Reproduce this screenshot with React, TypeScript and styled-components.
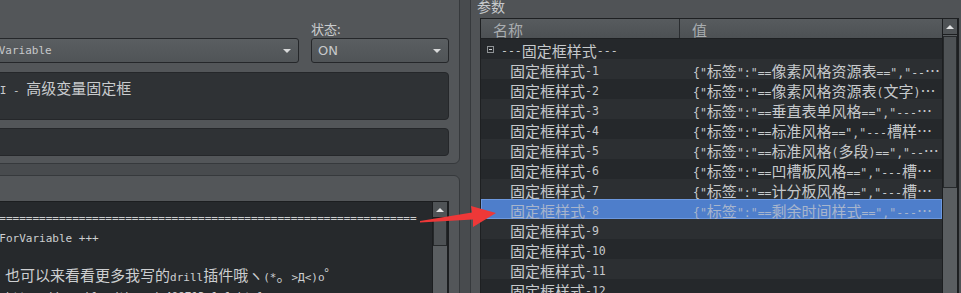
import React from 'react';
import styled, { createGlobalStyle } from 'styled-components';

const GlobalStyle = createGlobalStyle`
	html,
	body {
		margin: 0;
		padding: 0;
		background: #484b4e;
	}
	body {
		font-family: "Noto Sans CJK SC", "DejaVu Sans", sans-serif;
	}
`;

const Window = styled.div`
	position: relative;
	display: flex;
	width: 961px;
	height: 293px;
	overflow: hidden;
	background: #484b4e;
	color: #c8cacc;
	font-family: "Noto Sans CJK SC", "DejaVu Sans", sans-serif;
`;

/* ---------- left side: plugin form ---------- */

const LeftPane = styled.div`
	flex: none;
	width: 460px;
	overflow: hidden;
`;
const LeftContent = styled.div`
	display: flex;
	flex-direction: column;
	width: 570px;
	margin-left: -110px;
`;
const GroupBox = styled.section<{ $top: number; $pad: string }>`
	flex: none;
	box-sizing: border-box;
	margin-top: ${(p) => p.$top}px;
	padding: ${(p) => p.$pad};
	border: 1px solid #36393c;
	border-radius: 6px;
	background: #535659;
`;
const FieldGrid = styled.div`
	display: grid;
	grid-template-columns: 1fr 138px;
	grid-template-rows: 18px 25px;
	column-gap: 12px;
`;
const FieldLabel = styled.div`
	grid-column: 2;
	font-size: 13px;
	line-height: 18px;
	color: #c9cbcd;
`;
const Combo = styled.div<{ $col: number }>`
	grid-column: ${(p) => p.$col};
	grid-row: 2;
	box-sizing: border-box;
	display: flex;
	align-items: center;
	height: 25px;
	padding: 0 6px;
	border: 1px solid #25272a;
	border-radius: 3px;
	background: linear-gradient(#5a5e61, #505457);
	white-space: pre;
	overflow: hidden;
`;
const ComboText = styled.span<{ $mono?: boolean }>`
	flex: 1;
	font-family: ${(p) => (p.$mono ? '"DejaVu Sans Mono", monospace' : '"DejaVu Sans", sans-serif')};
	font-size: ${(p) => (p.$mono ? 11 : 13)}px;
	color: #c6c8ca;
`;
const ComboArrow = styled.span`
	width: 0;
	height: 0;
	margin-right: 1px;
	border-left: 4px solid transparent;
	border-right: 4px solid transparent;
	border-top: 4px solid #d8d9da;
`;
const TextBox = styled.div<{ $h: number; $gap: number }>`
	box-sizing: border-box;
	height: ${(p) => p.$h}px;
	margin-top: ${(p) => p.$gap}px;
	padding: 5px 7px;
	border: 1px solid #25272a;
	border-radius: 4px;
	background: #2f3235;
	font-size: 15px;
	line-height: 20px;
	white-space: pre;
	overflow: hidden;
	color: #c9cbcd;
`;
const Editor = styled.div`
	display: flex;
	height: 130px;
	border: 1px solid #1c1e20;
	background: #26292c;
`;
const EditorText = styled.div`
	flex: 1;
	min-width: 0;
	padding-top: 4px;
	font-size: 15px;
	white-space: pre;
	overflow: hidden;
	color: #cdcfd1;
`;
const EditorLine = styled.div`
	height: 19.5px;
	line-height: 19.5px;
`;
const ScrollBar = styled.div<{ $thumbTop: number; $thumbH: number }>`
	display: flex;
	flex-direction: column;
	flex: none;
	width: 14px;
	border-left: 1px solid #1c1e20;
	border-right: 1px solid #1c1e20;
	background: #5a5e61;
	&::after {
		content: '';
		box-sizing: border-box;
		height: ${(p) => p.$thumbH}px;
		margin-top: ${(p) => p.$thumbTop}px;
		border: 1px solid #26292b;
		background: #4e5255;
	}
`;
const ScrollUp = styled.div`
	display: flex;
	align-items: center;
	justify-content: center;
	height: 15px;
	border-bottom: 1px solid #1c1e20;
	background: #4f5356;
	&::before {
		content: '';
		border-left: 4px solid transparent;
		border-right: 4px solid transparent;
		border-bottom: 4px solid #e2e3e4;
	}
`;

/* ---------- right side: parameter table ---------- */

const Splitter = styled.div`
	flex: none;
	width: 10px;
`;
const RightPane = styled.div`
	flex: 1;
	display: flex;
	flex-direction: column;
	padding-left: 6px;
	border-left: 1px solid #36393c;
	background: #505356;
`;
const PaneTitle = styled.div`
	flex: none;
	margin-top: -3px;
	height: 21px;
	font-size: 14px;
	line-height: 18px;
	color: #c6c9cc;
`;
const Table = styled.div`
	flex: none;
	display: flex;
	width: 479px;
	height: 290px;
	margin-left: 3px;
	box-sizing: border-box;
	border: 1px solid #1e2022;
	background: #26292c;
`;
const TableMain = styled.div`
	flex: 1;
	min-width: 0;
	display: flex;
	flex-direction: column;
`;
const HeaderRow = styled.div`
	flex: none;
	display: grid;
	grid-template-columns: 199px 1fr;
	height: 19px;
	border-bottom: 1px solid #1e2022;
	background: linear-gradient(#575b5e, #4d5154);
`;
const HeaderCell = styled.div<{ $sep?: boolean }>`
	box-sizing: border-box;
	padding: 1px 0 0 12px;
	border-right: ${(p) => (p.$sep ? '1px solid #2a2d30' : 'none')};
	font-size: 15px;
	line-height: 19px;
	overflow: hidden;
	color: #a9adb0;
`;
const Row = styled.div<{ $alt: boolean; $selected: boolean }>`
	flex: none;
	box-sizing: border-box;
	display: grid;
	grid-template-columns: 200px 1fr;
	height: 20px;
	padding-top: 2px;
	font-size: 15px;
	line-height: 20px;
	white-space: pre;
	background: ${(p) => (p.$selected ? '#4e7ecb' : p.$alt ? '#2c2f32' : '#25282b')};
	box-shadow: ${(p) => (p.$selected ? 'inset 0 0 0 1px #6c98df' : 'none')};
	color: ${(p) => (p.$selected ? '#a7b5cd' : '#c6c9cc')};
`;
const NameCell = styled.div<{ $indent: number }>`
	display: flex;
	align-items: flex-start;
	height: 20px;
	padding-left: ${(p) => p.$indent}px;
	overflow: hidden;
`;
const ValueCell = styled.div`
	height: 20px;
	padding-left: 12px;
	overflow: hidden;
	text-overflow: ellipsis;
`;
const Collapse = styled.span`
	position: relative;
	flex: none;
	box-sizing: border-box;
	width: 7px;
	height: 7px;
	margin: 5px 7px 0 0;
	border: 1px solid #8e9295;
	&::after {
		content: '';
		position: absolute;
		left: 1px;
		right: 1px;
		top: 2px;
		height: 1px;
		background: #d0d2d4;
	}
`;
const Latin = styled.span<{ $size: number }>`
	font-family: "DejaVu Sans Mono", monospace;
	font-size: ${(p) => p.$size}px;
`;

const Pointer = styled.svg`
	position: absolute;
	left: 418px;
	top: 202px;
	pointer-events: none;
`;

const LATIN_RUN = /([\u0000-\u024f\u0400-\u04ff]+)/;

const Mixed: React.FC<{ text: string; size?: number }> = ({ text, size = 11 }) => (
	<>
		{text
			.split(LATIN_RUN)
			.filter(Boolean)
			.map((part, i) =>
				LATIN_RUN.test(part) ? (
					<Latin key={i} $size={size}>
						{part}
					</Latin>
				) : (
					<span key={i}>{part}</span>
				),
			)}
	</>
);

const editorLines = [
	'='.repeat(78),
	'+++ Drill_GaugeForVariable +++',
	'',
	'如果你有兴趣，也可以来看看更多我写的drill插件哦ヽ(*。>Д<)o゜',
	'                https://rpg.blue/thread-409713-1-1.html',
];

const tail = ',"---槽样式---":"","资源-背景":"Gauge_Bg","资源-槽":"Gauge_Fill"}';
const values = [
	'{"标签":"==像素风格资源表=="' + tail,
	'{"标签":"==像素风格资源表(文字)=="' + tail,
	'{"标签":"==垂直表单风格=="' + tail,
	'{"标签":"==标准风格=="' + tail,
	'{"标签":"==标准风格(多段)=="' + tail,
	'{"标签":"==凹槽板风格=="' + tail,
	'{"标签":"==计分板风格=="' + tail,
	'{"标签":"==剩余时间样式=="' + tail,
	'',
	'',
	'',
	'',
];

const App: React.FC = () => {
	return (
		<>
			<GlobalStyle />
			<Window>
				<LeftPane>
					<LeftContent>
						<GroupBox $top={-10} $pad="29px 10px 7px 8px">
							<FieldGrid>
								<FieldLabel>状态:</FieldLabel>
								<Combo $col={1}>
									<ComboText $mono>Drill_GaugeForVariable</ComboText>
									<ComboArrow />
								</Combo>
								<Combo $col={2}>
									<ComboText>ON</ComboText>
									<ComboArrow />
								</Combo>
							</FieldGrid>
							<TextBox $h={48} $gap={9}>
								<Mixed text="[v1.7]       UI - 高级变量固定框" />
							</TextBox>
							<TextBox $h={28} $gap={8} />
						</GroupBox>
						<GroupBox $top={11} $pad="25px 10px 0 8px">
							<Editor>
								<EditorText>
									{editorLines.map((line, i) => (
										<EditorLine key={i}>
											<Mixed text={line || ' '} />
										</EditorLine>
									))}
								</EditorText>
								<ScrollBar $thumbTop={0} $thumbH={28}>
									<ScrollUp />
								</ScrollBar>
							</Editor>
						</GroupBox>
					</LeftContent>
				</LeftPane>
				<Splitter />
				<RightPane>
					<PaneTitle>参数</PaneTitle>
					<Table>
						<TableMain>
							<HeaderRow>
								<HeaderCell $sep>名称</HeaderCell>
								<HeaderCell>值</HeaderCell>
							</HeaderRow>
							<Row $alt={false} $selected={false}>
								<NameCell $indent={6}>
									<Collapse />
									<Mixed text="---固定框样式---" size={11.5} />
								</NameCell>
								<ValueCell />
							</Row>
							{values.map((value, i) => (
								<Row key={i} $alt={i % 2 === 0} $selected={i === 7}>
									<NameCell $indent={29}>
										<Mixed text={`固定框样式-${i + 1}`} size={11.5} />
									</NameCell>
									<ValueCell>
										<Mixed text={value} size={11.5} />
									</ValueCell>
								</Row>
							))}
						</TableMain>
						<ScrollBar $thumbTop={1} $thumbH={152}>
							<ScrollUp />
						</ScrollBar>
					</Table>
				</RightPane>
				<Pointer width="82" height="28" viewBox="0 0 82 28">
					<polygon
						points="2,19 54,10.5 53,4 78,11 55,25 55,17.5 2,20.5"
						fill="#ee3838"
					/>
				</Pointer>
			</Window>
		</>
	);
};

export default App;
